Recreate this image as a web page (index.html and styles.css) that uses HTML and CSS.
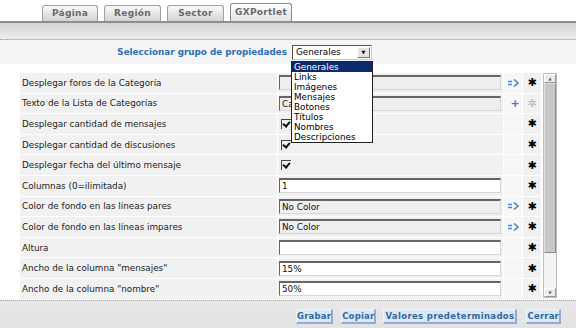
FILE: index.html
```html
<!DOCTYPE html>
<html lang="es">
<head>
    <meta charset="UTF-8">
    <title>Propiedades</title>
    <link rel="stylesheet" href="styles.css">
</head>
<body>
    <div class="tabs">
        <span class="tab">Página</span>
        <span class="tab">Región</span>
        <span class="tab">Sector</span>
        <span class="tab active">GXPortlet</span>
    </div>
    <div class="band"></div>

    <div class="group">
        <span class="group-label">Seleccionar grupo de propiedades</span>
        <div class="select-wrap">
            <div class="select"><span>Generales</span><span class="arrow">&#9660;</span></div>
            <ul class="options">
                <li class="sel">Generales</li>
                <li>Links</li>
                <li>Imágenes</li>
                <li>Mensajes</li>
                <li>Botones</li>
                <li>Títulos</li>
                <li>Nombres</li>
                <li>Descripciones</li>
            </ul>
        </div>
    </div>

    <div class="props">
        <div class="grid">
            <div class="lbl">Desplegar foros de la Categoría</div>
            <div class="val"><span class="input gray"></span></div>
            <div class="ico"><svg class="go" width="11" height="8" viewBox="0 0 11 8"><path d="M0 2.5h4M0 5.5h4M6 0.5l4 3.5-4 3.5" fill="none" stroke="#4a86c8" stroke-width="1.6"/></svg></div>
            <div class="star">&#10033;</div>

            <div class="lbl">Texto de la Lista de Categorías</div>
            <div class="val"><span class="input gray">Ca</span></div>
            <div class="ico"><span class="plus">+</span></div>
            <div class="star off">&#10034;</div>

            <div class="lbl">Desplegar cantidad de mensajes</div>
            <div class="val"><span class="check"></span></div>
            <div class="ico"></div>
            <div class="star">&#10033;</div>

            <div class="lbl">Desplegar cantidad de discusiones</div>
            <div class="val"><span class="check"></span></div>
            <div class="ico"></div>
            <div class="star">&#10033;</div>

            <div class="lbl">Desplegar fecha del último mensaje</div>
            <div class="val"><span class="check"></span></div>
            <div class="ico"></div>
            <div class="star">&#10033;</div>

            <div class="lbl">Columnas (0=ilimitada)</div>
            <div class="val"><span class="input">1</span></div>
            <div class="ico"></div>
            <div class="star">&#10033;</div>

            <div class="lbl">Color de fondo en las líneas pares</div>
            <div class="val"><span class="input gray">No Color</span></div>
            <div class="ico"><svg class="go" width="11" height="8" viewBox="0 0 11 8"><path d="M0 2.5h4M0 5.5h4M6 0.5l4 3.5-4 3.5" fill="none" stroke="#4a86c8" stroke-width="1.6"/></svg></div>
            <div class="star">&#10033;</div>

            <div class="lbl">Color de fondo en las líneas impares</div>
            <div class="val"><span class="input gray">No Color</span></div>
            <div class="ico"><svg class="go" width="11" height="8" viewBox="0 0 11 8"><path d="M0 2.5h4M0 5.5h4M6 0.5l4 3.5-4 3.5" fill="none" stroke="#4a86c8" stroke-width="1.6"/></svg></div>
            <div class="star">&#10033;</div>

            <div class="lbl">Altura</div>
            <div class="val"><span class="input"></span></div>
            <div class="ico"></div>
            <div class="star">&#10033;</div>

            <div class="lbl">Ancho de la columna "mensajes"</div>
            <div class="val"><span class="input">15%</span></div>
            <div class="ico"></div>
            <div class="star">&#10033;</div>

            <div class="lbl">Ancho de la columna "nombre"</div>
            <div class="val"><span class="input">50%</span></div>
            <div class="ico"></div>
            <div class="star">&#10033;</div>
        </div>
        <div class="scrollbar">
            <span class="sb-btn">&#9650;</span>
            <span class="sb-thumb"></span>
            <span class="sb-track"></span>
            <span class="sb-btn">&#9660;</span>
        </div>
    </div>

    <div class="footer">
        <span class="btn">Grabar</span>
        <span class="btn">Copiar</span>
        <span class="btn wide">Valores predeterminados</span>
        <span class="btn last">Cerrar</span>
    </div>
</body>
</html>
```

FILE: styles.css
```css
* {
    padding: 0;
    margin: 0;
    box-sizing: border-box;
}

body {
    width: 576px;
    height: 328px;
    overflow: hidden;
    background: #fff;
    font-family: "DejaVu Sans", Verdana, sans-serif;
    font-size: 8.8px;
    color: #222;
}

/* pestañas */
.tabs {
    height: 23px;
    display: flex;
    align-items: flex-end;
    gap: 6px;
    padding-left: 42px;
    border-bottom: 2px solid #8e8e8e;
}

.tab {
    width: 57px;
    height: 16px;
    border: 1px solid #a0a0a0;
    border-bottom: none;
    border-radius: 3px 3px 0 0;
    background: linear-gradient(#fafafa, #d2d2d2);
    color: #6a6a6a;
    font-weight: bold;
    font-size: 9px;
    text-align: center;
    line-height: 15px;
    letter-spacing: 0.3px;
}

.tab:first-child {
    width: 56px;
}

.tab.active {
    width: 62px;
    height: 18px;
    line-height: 17px;
    background: linear-gradient(#fff, #e2e2e2);
    border-color: #888;
}

.band {
    height: 17px;
    background: linear-gradient(#d4d4d4, #ededed);
    border-bottom: 1px dotted #a8a8a8;
}

/* grupo de propiedades */
.group {
    height: 24px;
    background: #f5f5f5;
    display: flex;
    align-items: center;
}

.group-label {
    width: 292px;
    text-align: right;
    padding-right: 5px;
    color: #2d6fb7;
    font-weight: bold;
    font-size: 8.8px;
}

.select-wrap {
    position: relative;
}

.select {
    width: 80px;
    height: 15px;
    background: #fff;
    border: 1px solid;
    border-color: #555 #ccc #ccc #555;
    display: flex;
    align-items: center;
    justify-content: space-between;
    padding-left: 3px;
    font-size: 8.8px;
    color: #000;
}

.arrow {
    width: 13px;
    height: 11px;
    margin-right: 1px;
    background: #e4e4e4;
    border: 1px solid;
    border-color: #fff #777 #777 #fff;
    font-size: 5px;
    text-align: center;
    line-height: 9px;
}

.options {
    position: absolute;
    left: -1px;
    top: 16px;
    width: 82px;
    list-style: none;
    background: #fff;
    border: 1px solid #222;
    font-size: 8.8px;
    color: #000;
    z-index: 5;
}

.options li {
    height: 10px;
    line-height: 10px;
    padding-left: 2px;
}

.options li.sel {
    background: #0c2a6e;
    color: #fff;
}

/* tabla de propiedades */
.props {
    display: flex;
    margin: 9px 0 0 20px;
    height: 226px;
}

.grid {
    display: grid;
    grid-template-columns: 257px 225px 18px 18px;
    grid-auto-rows: 19.6px;
    gap: 1px;
    align-content: start;
}

.grid > div {
    background: #f1f1f1;
    display: flex;
    align-items: center;
}

.lbl {
    padding-left: 2px;
}

.val {
    padding-left: 1px;
}

.grid > .ico {
    background: #f7f7f7;
    justify-content: center;
}

.star {
    justify-content: center;
    font-size: 11px;
    color: #000;
}

.star.off {
    color: #b0b0b0;
}

.plus {
    color: #3d7cc4;
    font-weight: bold;
    font-size: 11px;
    margin-left: 4px;
}

.input {
    width: 222px;
    height: 15px;
    background: #fff;
    border: 1px solid;
    border-top-width: 2px;
    border-color: #666 #d6d6d6 #d6d6d6 #666;
    padding-left: 2px;
    line-height: 12px;
    color: #111;
}

.input.gray {
    background: #eeeeee;
}

.check {
    width: 10px;
    height: 10px;
    margin-left: 2px;
    border-left: 1px solid #444;
    border-top: 1px solid #444;
    position: relative;
}

.check::after {
    content: "";
    position: absolute;
    left: 2px;
    top: 0px;
    width: 3px;
    height: 5px;
    border-right: 2px solid #111;
    border-bottom: 2px solid #111;
    transform: rotate(40deg);
}

/* barra de desplazamiento */
.scrollbar {
    margin-left: 2px;
    width: 14px;
    height: 225px;
    border: 1px solid #bdbdbd;
    background: #f0f0f0;
    display: flex;
    flex-direction: column;
}

.sb-btn {
    height: 9px;
    background: #ececec;
    border: 1px solid;
    border-color: #fff #999 #999 #fff;
    font-size: 4px;
    color: #555;
    text-align: center;
    line-height: 7px;
}

.sb-thumb {
    height: 170px;
    background: #c8c8c8;
    border: 1px solid;
    border-color: #e0e0e0 #8c8c8c #8c8c8c #e0e0e0;
}

.sb-track {
    flex: 1;
    background: #f3f3f3;
}

/* pie */
.footer {
    margin-top: 1px;
    height: 29px;
    border-top: 1px dotted #a8a8a8;
    background: linear-gradient(#e8e8e8, #e2e2e2);
    display: flex;
    align-items: center;
    justify-content: flex-end;
    gap: 7px;
    padding: 2px 15px 0 0;
}

.btn {
    height: 15px;
    padding: 0;
    background: #dbe7f4;
    border: 1px solid;
    border-width: 1px 2px 2px 1px;
    border-color: #eef4fb #94abc9 #94abc9 #eef4fb;
    color: #35679f;
    font-weight: bold;
    font-size: 8.5px;
    line-height: 12px;
    letter-spacing: 0.2px;
}

.btn:first-child {
    margin-right: 1px;
}

.btn.wide {
    padding: 0 1px;
    letter-spacing: 0.35px;
}

.btn.last {
    margin-left: 2px;
}
```
